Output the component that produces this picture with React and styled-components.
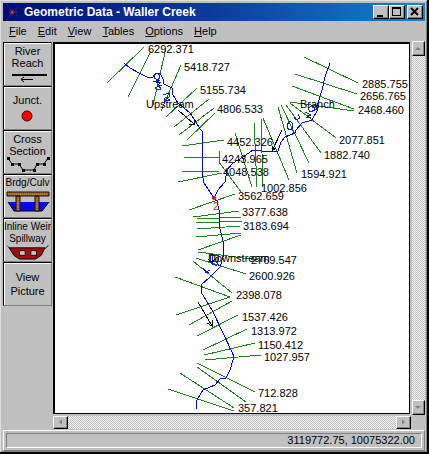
import React from 'react';
import styled, { createGlobalStyle } from 'styled-components';

const GlobalStyle = createGlobalStyle`
  * {
    box-sizing: border-box;
  }
  body {
    margin: 0;
    background: #c0c0c0;
    color: #000;
    font-family: "Liberation Sans", Arial, sans-serif;
    font-size: 11px;
    line-height: 12px;
  }
  button {
    font: inherit;
    color: inherit;
    padding: 0;
    border: 0;
    border-radius: 0;
    background: #c0c0c0;
  }
`;

const Window = styled.main`
  padding: 3px 2px 1px 3px;
  border-right: 2px solid #000;
  border-bottom: 2px solid #000;
  background: #c0c0c0;
  box-shadow: inset 1px 1px #dfdfdf, inset -1px -1px #808080;
`;

const TitleBar = styled.header`
  display: flex;
  align-items: center;
  height: 18px;
  padding: 0 2px 0 4px;
  background: linear-gradient(90deg, #000c7c, #0c3c9c 50%, #1084d0);
`;

const Title = styled.h1`
  flex: 1;
  margin: 0 0 0 4px;
  color: #fff;
  font-size: 12px;
  line-height: 18px;
  white-space: nowrap;
`;

const WindowButton = styled.button`
  display: flex;
  width: 16px;
  height: 14px;
  margin-left: ${props => (props.$apart ? '2px' : '0')};
  border: 1px solid;
  border-color: #fff #000 #000 #fff;
  box-shadow: inset -1px -1px #808080;
`;

const MenuBar = styled.nav`
  display: flex;
  align-items: center;
  gap: 11px;
  height: 20px;
  padding: 0 6px;

  button::first-letter {
    text-decoration: underline;
  }
`;

const Workspace = styled.div`
  display: grid;
  grid-template-columns: 50px 1fr 13px;
`;

const Toolbar = styled.div`
  grid-row: span 2;
  padding-top: 1px;
`;

const ToolButton = styled.button`
  display: flex;
  flex-direction: column;
  align-items: center;
  justify-content: ${props => (props.$centered ? 'center' : 'flex-start')};
  width: 49px;
  height: 44px;
  padding-top: ${props => (props.$centered ? '0' : '2px')};
  border: 1px solid;
  border-color: #000 #808080 #808080 #000;
  box-shadow: inset 1px 1px #fff;
  font-size: ${props => (props.$small ? '10px' : '11px')};
  line-height: ${props => (props.$centered ? '14px' : '12px')};
  white-space: nowrap;
  overflow: hidden;
`;

const Single = styled.span`
  padding: 5px 0 4px;
`;

const Canvas = styled.section`
  margin: 1px 2px 2px 0;
  border: solid #000;
  border-width: 2px 1px 1px 2px;
  background: #fff;
`;

const Plot = styled.svg`
  display: block;
  width: 100%;
  height: auto;
  font-size: 11px;
`;

const Scrollbar = styled.div`
  display: flex;
  flex-direction: ${props => (props.$vertical ? 'column' : 'row')};
  justify-content: space-between;
  ${props => (props.$vertical ? 'margin-bottom: 1px;' : 'height: 13px; margin-right: 1px;')}
  background: repeating-conic-gradient(#c0c0c0 0 25%, #f4f4f4 0 50%) 0 0 / 2px 2px;
`;

const ScrollButton = styled.button`
  display: flex;
  align-items: center;
  justify-content: center;
  width: ${props => (props.$vertical ? '13px' : '15px')};
  height: ${props => (props.$vertical ? '15px' : '13px')};
  border: 1px solid;
  border-color: #fff #000 #000 #fff;
  box-shadow: inset -1px -1px #808080;
`;

const StatusBar = styled.footer`
  margin-top: 1px;
  padding: 2px;
  border: 1px solid;
  border-color: #fff #808080 #808080 #fff;
`;

const Coordinates = styled.div`
  height: 15px;
  padding-right: 6px;
  border: 1px solid;
  border-color: #808080 #fff #fff #808080;
  line-height: 13px;
  text-align: right;
`;

const menus = ['File', 'Edit', 'View', 'Tables', 'Options', 'Help'];

const rivers = [
  '124,63 130,68 139,73 147,77 153,77 156,73 160,73 163,79 164,84 172,88 173,95 178,103 190,113 196,122 200,129 202,131 202,172 204,183 214,198',
  '330,63 325,77 322,90 318,103 317,111 312,120 302,123 296,130 295,133 285,137 281,142 278,151 270,152 253,150 243,157 233,163 227,170 225,182 218,190 214,198',
  '214,198 217,201 219,210 219,225 222,237 224,245 223,257 220,267 210,277 201,285 201,292 212,310 223,333 232,352 234,357 230,370 226,378 220,379 215,385 203,390 197,400 196,409',
];

// x1, y1, x2, y2
const crossSections = [
  [144, 47, 107, 83],
  [151, 51, 128, 97],
  [166, 48, 153, 105],
  [181, 65, 161, 111],
  [197, 88, 166, 117],
  [209, 99, 174, 127],
  [214, 108, 179, 135],
  [215, 113, 187, 140],
  [182, 146, 224, 140],
  [184, 157, 219, 157],
  [182, 172, 220, 171],
  [178, 182, 222, 173],
  [219, 151, 219, 162],
  [219, 162, 241, 192],
  [235, 133, 252, 187],
  [254, 123, 257, 187],
  [261, 118, 263, 187],
  [263, 118, 289, 180],
  [278, 107, 297, 173],
  [281, 105, 309, 163],
  [286, 105, 321, 153],
  [290, 103, 336, 138],
  [290, 102, 354, 111],
  [292, 86, 354, 109],
  [295, 74, 357, 94],
  [304, 57, 358, 83],
  [189, 210, 235, 194],
  [193, 217, 239, 211],
  [197, 219, 241, 217],
  [196, 223, 242, 221],
  [197, 229, 240, 226],
  [196, 237, 241, 233],
  [198, 250, 241, 235],
  [198, 252, 258, 260],
  [196, 258, 246, 274],
  [193, 261, 232, 293],
  [175, 277, 230, 297],
  [176, 315, 230, 297],
  [189, 325, 232, 301],
  [197, 336, 238, 315],
  [203, 350, 247, 329],
  [204, 355, 255, 343],
  [205, 360, 261, 355],
  [197, 363, 255, 392],
  [197, 367, 246, 402],
  [180, 373, 234, 408],
  [168, 389, 234, 411],
];

const labels = [
  [148, 53, '6292.371'],
  [184, 71, '5418.727'],
  [200, 94, '5155.734'],
  [217, 113, '4806.533'],
  [227, 146, '4452.326'],
  [222, 163, '4243.965'],
  [223, 176, '4048.538'],
  [261, 192, '1002.856'],
  [238, 200, '3562.659'],
  [242, 216, '3377.638'],
  [243, 230, '3183.694'],
  [251, 264, '2769.547'],
  [249, 280, '2600.926'],
  [236, 299, '2398.078'],
  [242, 321, '1537.426'],
  [251, 335, '1313.972'],
  [258, 349, '1150.412'],
  [264, 361, '1027.957'],
  [258, 397, '712.828'],
  [238, 412, '357.821'],
  [362, 88, '2885.755'],
  [360, 100, '2656.765'],
  [358, 114, '2468.460'],
  [339, 144, '2077.851'],
  [324, 159, '1882.740'],
  [301, 178, '1594.921'],
  [146, 108, 'Upstream'],
  [300, 108, 'Branch'],
  [208, 262, 'Downstream'],
];

function RiverPlot() {
  return (
    <Plot viewBox="55 44 354 369" role="img" aria-label="Waller Creek schematic">
      <g stroke="#208020" shapeRendering="crispEdges">
        {crossSections.map(([x1, y1, x2, y2]) => (
          <line key={`${x1}-${y1}-${x2}-${y2}`} x1={x1} y1={y1} x2={x2} y2={y2} />
        ))}
      </g>
      <g fill="none" stroke="#0000d0" shapeRendering="crispEdges">
        {rivers.map(points => <polyline key={points} points={points} />)}
      </g>
      {/* river name lettered along each reach */}
      <g fill="none" stroke="#0820d0" strokeLinejoin="round" shapeRendering="crispEdges">
        <path d="M154 75l3-2 3 3-2 4-4-2zM153 82l7-2-4 3 5-1-4 4 5-1M155 88l4-2 2 3-4 1zM163 95l6-2 0 4-4 0 5 3-4 1M164 98l1 5" />
        <path d="M287 125l3-4 2 2 0 6-3 1-2-3zM291 128l3 5M294 117l2 3 4-2-2-4M305 112l6 3-4 1 4 2-5-1M308 108l5-3 2 5-5 2zM312 107l3-3 3 4-3 2" />
        <path d="M210 255h8v6h-8zM212 254v11M217 257l-6 6 6 3M208 259l5 5M203 268l3 4 4-2M205 272l4 0M215 259l4 7" />
      </g>
      <g fill="none" stroke="#000" shapeRendering="crispEdges">
        <path d="M178 110L194 124M194 120V124H189" />
        <path d="M282 130L272 151M272 146V151L276 148" />
        <path d="M198 302L212 326M212 320V326L207 323" />
      </g>
      <circle cx="214" cy="198" r="2" fill="#f00" />
      <text x="213" y="210" fill="#e02020">2</text>
      {labels.map(([x, y, label]) => (
        <text key={label} x={x} y={y}>{label}</text>
      ))}
    </Plot>
  );
}

function Arrow({ d }) {
  return (
    <svg width="7" height="7" viewBox="0 0 7 7" aria-hidden="true">
      <path d={d} fill="#808080" />
    </svg>
  );
}

function ToolIcon({ height, children }) {
  return (
    <svg width="46" height={height} viewBox={`0 0 46 ${height}`} aria-hidden="true">
      {children}
    </svg>
  );
}

export default function App() {
  return (
    <>
      <GlobalStyle />
      <Window>
        <TitleBar>
          <svg width="13" height="14" viewBox="0 0 13 14" aria-hidden="true">
            <path d="M1 2l3 3M12 1L8 5M1 12l3-3M12 12L9 9" stroke="#24285c" />
            <path d="M2 7h8M5 4v7M3 5l4 4M7 5L3 9" stroke="#702048" />
            <path d="M4 7h3M5 6v3" stroke="#e04040" />
          </svg>
          <Title>Geometric Data - Waller Creek</Title>
          <WindowButton aria-label="Minimize">
            <svg width="14" height="12"><path d="M3 9h6v2H3z" /></svg>
          </WindowButton>
          <WindowButton aria-label="Maximize">
            <svg width="14" height="12">
              <path d="M2 1h9v9H2zM3 3v6h7V3z" fillRule="evenodd" />
            </svg>
          </WindowButton>
          <WindowButton $apart aria-label="Close">
            <svg width="14" height="12">
              <path d="M3 2l7 7M10 2L3 9" stroke="#000" strokeWidth="2" />
            </svg>
          </WindowButton>
        </TitleBar>
        <MenuBar>
          {menus.map(name => <button key={name}>{name}</button>)}
        </MenuBar>
        <Workspace>
          <Toolbar>
            <ToolButton>
              <span>River<br />Reach</span>
              <ToolIcon height={15}>
                <path d="M7 5h35v2H7z" />
                <path d="M16 10.5h12M19 8l-3 2.5 3 2.5" fill="none" stroke="#000" />
              </ToolIcon>
            </ToolButton>
            <ToolButton>
              <Single>Junct.</Single>
              <ToolIcon height={14}>
                <circle cx="22" cy="6" r="5" fill="#f00" stroke="#400" />
              </ToolIcon>
            </ToolButton>
            <ToolButton>
              <span>Cross<br />Section</span>
              <ToolIcon height={15}>
                <path d="M3 1l4 6h7l4 6h11l3-6h7l4-6" fill="none" stroke="#000" />
                <path d="M2 0h3v3H2zM6 6h3v3H6zM13 6h3v3h-3zM17 12h3v3h-3zM28 12h3v3h-3zM31 6h3v3h-3zM38 6h3v3h-3zM42 0h3v3h-3z" />
              </ToolIcon>
            </ToolButton>
            <ToolButton $small>
              <span>Brdg/Culv</span>
              <ToolIcon height={24}>
                <path d="M3 13h41l-7 9H9z" fill="#0808f0" />
                <path d="M3 13l6 9h28l7-9" fill="none" stroke="#000" />
                <path d="M2 3h42v4H2zM11 7h4v15h-4zM30 7h4v15h-4z" fill="#946428" stroke="#201000" />
                <path d="M3 5h40M13 8v13M32 8v13" stroke="#cc9448" strokeDasharray="1 1" />
              </ToolIcon>
            </ToolButton>
            <ToolButton $small>
              <span>Inline Weir<br />Spillway</span>
              <ToolIcon height={17}>
                <path d="M3 3h38l-4 8-6 4H14l-6-4z" fill="#a01010" stroke="#000" />
                <path d="M1 1l3 3M45 0l-4 4" stroke="#000" />
                <path d="M14 6h6v5h-6zM26 6h6v5h-6z" fill="#c8c8c8" stroke="#300" />
              </ToolIcon>
            </ToolButton>
            <ToolButton $centered>
              <span>View<br />Picture</span>
            </ToolButton>
          </Toolbar>
          <Canvas>
            <RiverPlot />
          </Canvas>
          <Scrollbar $vertical>
            <ScrollButton $vertical aria-label="Scroll up"><Arrow d="M0 5L3 2 6 5z" /></ScrollButton>
            <ScrollButton $vertical aria-label="Scroll down"><Arrow d="M0 2h6L3 5z" /></ScrollButton>
          </Scrollbar>
          <Scrollbar>
            <ScrollButton aria-label="Scroll left"><Arrow d="M5 0v6L2 3z" /></ScrollButton>
            <ScrollButton aria-label="Scroll right"><Arrow d="M2 0v6l3-3z" /></ScrollButton>
          </Scrollbar>
        </Workspace>
        <StatusBar>
          <Coordinates>3119772.75, 10075322.00</Coordinates>
        </StatusBar>
      </Window>
    </>
  );
}
